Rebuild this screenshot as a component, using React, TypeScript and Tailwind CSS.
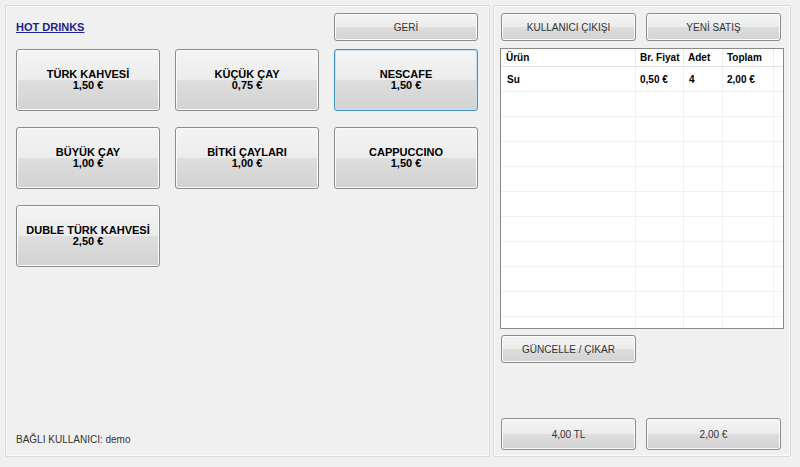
const btnBase =
  "flex flex-col items-center justify-center rounded-[3px] border bg-[linear-gradient(to_bottom,#f4f4f4_0%,#ececec_50%,#dedede_50%,#d2d2d2_100%)]";
const btn = `${btnBase} border-[#8c8c8c] shadow-[inset_0_0_0_1px_#fbfbfb]`;
const btnFocused = `${btnBase} border-[#3d8fc4] shadow-[inset_0_0_0_1px_#c4e6f6]`;

const drinks = [
  { name: "TÜRK KAHVESİ", price: "1,50 €" },
  { name: "KÜÇÜK ÇAY", price: "0,75 €" },
  { name: "NESCAFE", price: "1,50 €", focused: true },
  { name: "BÜYÜK ÇAY", price: "1,00 €" },
  { name: "BİTKİ ÇAYLARI", price: "1,00 €" },
  { name: "CAPPUCCINO", price: "1,50 €" },
  { name: "DUBLE TÜRK KAHVESİ", price: "2,50 €" },
];

const rows = [{ urun: "Su", fiyat: "0,50 €", adet: "4", toplam: "2,00 €" }];

const App = () => {
  const emptyRows = Array.from({ length: 10 });

  return (
    <main
      className="w-[800px] h-[467px] bg-[#f0f0f0] flex gap-[3px] pt-[5px] pl-[5px] pb-[10px] text-black"
      style={{ fontFamily: '"Liberation Sans", Arial, sans-serif' }}
    >
      {/* left: drink menu */}
      <section className="w-[485px] h-full border border-[#dadada] rounded-[2px] shadow-[inset_0_0_0_1px_#fafafa] flex flex-col pl-[10px] pr-[11px] pt-[7px] pb-[9px]">
        <div className="flex items-center justify-between h-[28px]">
          <a className="text-[11px] font-bold underline text-[#1e1e8c]">
            HOT DRINKS
          </a>
          <button className={`${btn} w-[144px] h-[28px] text-[10px] text-[#333]`}>
            GERİ
          </button>
        </div>
        <div className="grid grid-cols-[144px_144px_144px] gap-x-[15px] gap-y-[16px] mt-[8px]">
          {drinks.map((d) => (
            <button
              key={d.name}
              className={`${d.focused ? btnFocused : btn} h-[62px] text-[11px] font-bold leading-[11px]`}
            >
              <span>{d.name}</span>
              <span>{d.price}</span>
            </button>
          ))}
        </div>
        <p className="mt-auto text-[10px] text-[#333]">BAĞLI KULLANICI: demo</p>
      </section>

      {/* right: cart */}
      <section className="w-[298px] h-full border border-[#dadada] rounded-[2px] shadow-[inset_0_0_0_1px_#fafafa] flex flex-col pl-[7px] pt-[7px] pb-[6px]">
        <div className="flex gap-[10px]">
          <button className={`${btn} w-[135px] h-[28px] text-[10px] text-[#333]`}>
            KULLANICI ÇIKIŞI
          </button>
          <button className={`${btn} w-[135px] h-[28px] text-[10px] text-[#333]`}>
            YENİ SATIŞ
          </button>
        </div>

        <div className="mt-[7px] -ml-[1px] w-[284px] h-[281px] border border-[#8a8a8a] bg-white overflow-hidden text-[10px]">
          <div className="flex h-[18px] items-center font-bold border-b border-[#e2e2e2]">
            <div className="w-[135px] pl-[5px] border-r border-[#ececec] h-full flex items-center">Ürün</div>
            <div className="w-[48px] pl-[4px] border-r border-[#ececec] h-full flex items-center">Br. Fiyat</div>
            <div className="w-[39px] pl-[4px] border-r border-[#ececec] h-full flex items-center">Adet</div>
            <div className="w-[51px] pl-[4px] border-r border-[#ececec] h-full flex items-center">Toplam</div>
          </div>
          {rows.map((r) => (
            <div key={r.urun} className="flex h-[25px] font-bold border-b border-[#ececec]">
              <div className="w-[135px] pl-[6px] border-r border-[#f0f0f0] flex items-center">{r.urun}</div>
              <div className="w-[48px] pl-[4px] border-r border-[#f0f0f0] flex items-center">{r.fiyat}</div>
              <div className="w-[39px] pl-[5px] border-r border-[#f0f0f0] flex items-center">{r.adet}</div>
              <div className="w-[51px] pl-[4px] border-r border-[#f0f0f0] flex items-center">{r.toplam}</div>
            </div>
          ))}
          {emptyRows.map((_, i) => (
            <div key={i} className="flex h-[25px] border-b border-[#f0f0f0]">
              <div className="w-[135px] border-r border-[#f0f0f0]" />
              <div className="w-[48px] border-r border-[#f0f0f0]" />
              <div className="w-[39px] border-r border-[#f0f0f0]" />
              <div className="w-[51px] border-r border-[#f0f0f0]" />
            </div>
          ))}
        </div>

        <button className={`${btn} mt-[6px] w-[135px] h-[28px] text-[10px] text-[#333]`}>
          GÜNCELLE / ÇIKAR
        </button>

        <div className="mt-auto flex gap-[10px]">
          <button className={`${btn} w-[135px] h-[32px] text-[10px] text-[#333]`}>
            4,00 TL
          </button>
          <button className={`${btn} w-[135px] h-[32px] text-[10px] text-[#333]`}>
            2,00 €
          </button>
        </div>
      </section>
    </main>
  );
};

export default App;
